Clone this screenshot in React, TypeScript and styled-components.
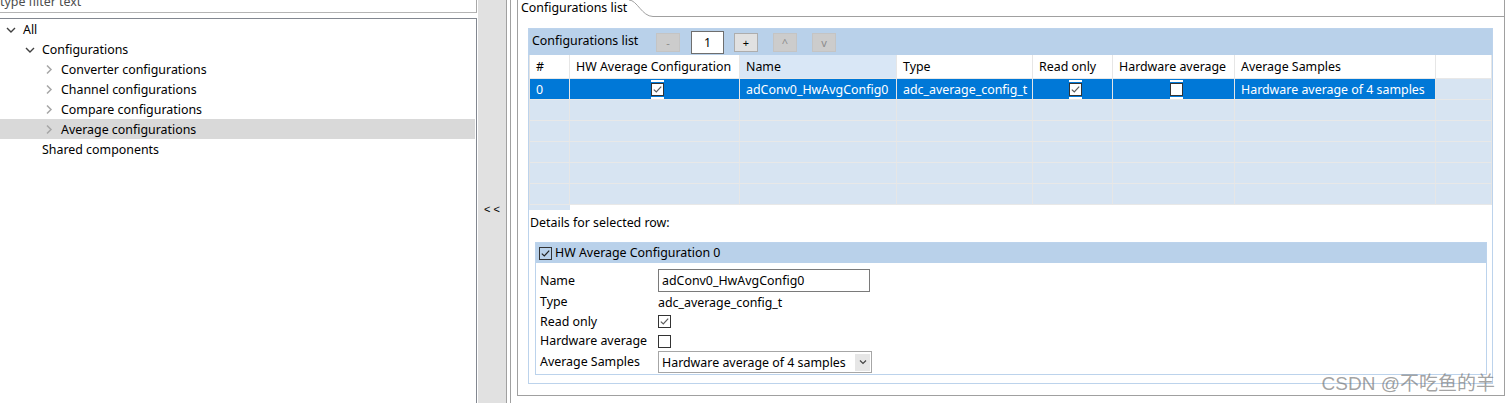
import React from 'react';
import styled, { createGlobalStyle, css } from 'styled-components';

const GlobalStyle = createGlobalStyle`
  *, *::before, *::after { box-sizing: border-box; }
  html, body { margin: 0; padding: 0; background: #fff; }
  body {
    font-family: "Noto Sans", "Noto Sans CJK SC", sans-serif;
    font-size: 12.4px;
    color: #000;
    overflow: hidden;
  }
`;

const Screen = styled.div`
  position: relative;
  display: flex;
  width: 1511px;
  height: 403px;
  overflow: hidden;
  background: #fff;
`;

/* ---------- left tree panel ---------- */
const LeftPanel = styled.div`
  flex: none;
  width: 477px;
  display: flex;
  flex-direction: column;
`;

const FilterBox = styled.div`
  flex: none;
  height: 13px;
  border-right: 1px solid #a8a8a8;
  border-bottom: 1px solid #b4b4b4;
  overflow: hidden;
`;

const FilterText = styled.div`
  margin-top: -5px;
  line-height: 14px;
  color: #4d4d4d;
  white-space: nowrap;
`;

const TreeBox = styled.div`
  flex: 1;
  margin-top: 5px;
  border-top: 1px solid #828790;
  border-right: 1px solid #828790;
  padding-right: 1px;
`;

const TreeRow = styled.div<{ $level: number; $selected?: boolean }>`
  display: flex;
  align-items: center;
  height: 20px;
  padding-left: ${p => 3 + p.$level * 19}px;
  background: ${p => (p.$selected ? '#d9d9d9' : 'transparent')};
  white-space: nowrap;
`;

const TwistySvg = styled.svg`
  flex: none;
  width: 16px;
  height: 16px;
  margin-right: 4px;
`;

type TwistyState = 'open' | 'closed' | 'none';

const Twisty = ({ state }: { state: TwistyState }) => (
  <TwistySvg viewBox="0 0 16 16">
    {state === 'open' && (
      <path d="M4 7 L8 11 L12 7" fill="none" stroke="#404040" strokeWidth="1.4" />
    )}
    {state === 'closed' && (
      <path d="M6 4.5 L10 8.5 L6 12.5" fill="none" stroke="#a6a6a6" strokeWidth="1.5" />
    )}
  </TwistySvg>
);

/* ---------- sash ---------- */
const Sash = styled.div`
  flex: none;
  width: 29px;
  margin-left: 1px;
  background: #e1e1e1;
  border-right: 1px solid #a0a0a0;
  display: flex;
  justify-content: center;
`;

const SashGlyph = styled.span`
  margin-top: 203px;
  height: 12px;
  line-height: 12px;
  font-family: "Liberation Sans", sans-serif;
  font-size: 11px;
  letter-spacing: 3px;
  padding-left: 3px;
  color: #000;
`;

/* ---------- editor / tab folder ---------- */
const Editor = styled.div`
  flex: 1;
  display: flex;
  margin-left: 3px;
  border-left: 1px solid #a0a0a0;
  padding: 0 6px 7px 6px;
`;

const TabFolder = styled.div`
  flex: 1;
  display: flex;
  flex-direction: column;
  border-left: 1px solid #a0a0a0;
  border-right: 1px solid #a0a0a0;
  border-bottom: 1px solid #a0a0a0;
`;

const TabHeader = styled.div`
  flex: none;
  display: flex;
  height: 17px;
`;

const TabLabel = styled.div`
  flex: none;
  width: 111px;
  height: 16px;
  line-height: 15px;
  padding-left: 3px;
  white-space: nowrap;
`;

const TabCurve = styled.svg`
  flex: none;
  width: 26px;
  height: 17px;
`;

const TabRest = styled.div`
  flex: 1;
  height: 17px;
  border-bottom: 1px solid #a0a0a0;
`;

const TabBody = styled.div`
  flex: 1;
  display: flex;
  flex-direction: column;
  padding: 11px 11px 11px 10px;
`;

const Section = styled.div`
  flex: 1;
  display: flex;
  flex-direction: column;
  border: 1px solid #bcd3ec;
`;

const SectionHeader = styled.div`
  flex: none;
  display: flex;
  align-items: center;
  height: 26px;
  padding-left: 3px;
  background: #b9d1ea;
`;

const SectionTitle = styled.span`
  flex: none;
  width: 124px;
  margin-bottom: 4px;
  white-space: nowrap;
`;

const ToolButton = styled.button<{ $enabled?: boolean; $gap: number }>`
  flex: none;
  width: 24px;
  height: 19px;
  margin-left: ${p => p.$gap}px;
  padding: 0;
  display: flex;
  align-items: center;
  justify-content: center;
  font-family: "Noto Sans", sans-serif;
  font-size: 11px;
  line-height: 1;
  border: 1px solid ${p => (p.$enabled ? '#adadad' : '#c4c4c4')};
  background: ${p => (p.$enabled ? '#e1e1e1' : '#cccccc')};
  color: ${p => (p.$enabled ? '#000' : '#8c8c8c')};
`;

const IndexInput = styled.div`
  flex: none;
  width: 33px;
  height: 23px;
  margin-left: 11px;
  display: flex;
  align-items: center;
  justify-content: center;
  background: #fff;
  border: 1px solid #6e6e6e;
`;

/* ---------- table ---------- */
const Table = styled.div`
  flex: none;
  display: flex;
  flex-direction: column;
  border-left: 1px solid #e3e3e3;
`;

const Row = styled.div<{ $header?: boolean }>`
  display: grid;
  grid-template-columns: 40px 170px 157px 136px 80px 122px 201px 1fr;
  height: ${p => (p.$header ? 24 : 21)}px;
`;

type Tone = 'header' | 'sorted' | 'selected' | 'empty';

const toneBg: Record<Tone, string> = {
  header: '#ffffff',
  sorted: '#d9e7f6',
  selected: '#0078d7',
  empty: '#d7e4f2',
};

const Cell = styled.div<{ $tone: Tone; $center?: boolean }>`
  display: flex;
  align-items: center;
  justify-content: ${p => (p.$center ? 'center' : 'flex-start')};
  padding-left: 6px;
  overflow: hidden;
  white-space: nowrap;
  border-right: 1px solid #e6e6e6;
  border-bottom: 1px solid #e8e8e8;
  background: ${p => toneBg[p.$tone]};
  color: ${p => (p.$tone === 'selected' ? '#fff' : '#000')};
`;

const ScrollStub = styled.div`
  flex: none;
  width: 41px;
  height: 5px;
  background: #d7e4f2;
`;

/* ---------- details ---------- */
const DetailsCaption = styled.div`
  flex: none;
  margin-top: 4px;
  padding-left: 1px;
  height: 18px;
  line-height: 17px;
`;

const Group = styled.div`
  flex: none;
  margin: 10px 5px 8px 6px;
  border: 1px solid #bcd3ec;
`;

const GroupHeader = styled.div`
  display: flex;
  align-items: center;
  height: 20px;
  padding-left: 3px;
  background: #b9d1ea;
  gap: 3px;
`;

const GroupTitle = styled.span`
  margin-bottom: 1px;
  white-space: nowrap;
`;

const FieldGrid = styled.div`
  display: grid;
  grid-template-columns: 118px 1fr;
  grid-template-rows: 23px 20px 19px 20px 22px;
  padding: 6px 0 1px 4px;
`;

const FieldLabel = styled.div`
  display: flex;
  align-items: center;
  padding-bottom: 1px;
  white-space: nowrap;
`;

const FieldValue = styled.div<{ $alignEnd?: boolean }>`
  display: flex;
  align-items: ${p => (p.$alignEnd ? 'flex-end' : 'center')};
  white-space: nowrap;
`;

const TextField = styled.div`
  width: 212px;
  height: 23px;
  display: flex;
  align-items: center;
  padding-left: 3px;
  border: 1px solid #7a7a7a;
  background: #fff;
`;

const SelectField = styled.div`
  width: 214px;
  height: 22px;
  display: flex;
  align-items: center;
  padding: 0 1px 0 3px;
  border: 1px solid #a6a6a6;
  background: #fff;
`;

const SelectText = styled.span`
  flex: 1;
  white-space: nowrap;
`;

const SelectArrow = styled.span`
  flex: none;
  width: 15px;
  height: 17px;
  display: flex;
  align-items: center;
  justify-content: center;
  background: #e6e6e6;
`;

const Box = styled.span<{ $onBlue?: boolean; $clear?: boolean }>`
  position: relative;
  flex: none;
  width: 13px;
  height: 13px;
  display: inline-flex;
  align-items: center;
  justify-content: center;
  border: 1px solid #333;
  background: ${p => (p.$clear ? 'transparent' : '#fff')};
  ${p =>
    p.$onBlue &&
    css`
      &::before,
      &::after {
        content: '';
        position: absolute;
        left: -1px;
        right: -1px;
        height: 2px;
        background: #fff;
      }
      &::before { top: -4px; }
      &::after { bottom: -4px; }
    `}
`;

const CheckBox = ({
  checked,
  onBlue,
  clear,
  color = '#5c5c5c',
}: {
  checked?: boolean;
  onBlue?: boolean;
  clear?: boolean;
  color?: string;
}) => (
  <Box $onBlue={onBlue} $clear={clear}>
    {checked && (
      <svg width="11" height="11" viewBox="0 0 11 11">
        <polyline points="1.8,5.6 4.3,8 9.2,2.6" fill="none" stroke={color} strokeWidth="1.2" />
      </svg>
    )}
  </Box>
);

const Watermark = styled.div`
  position: absolute;
  right: 16px;
  bottom: 8px;
  font-family: "Liberation Sans", "Noto Sans CJK SC", sans-serif;
  font-size: 19px;
  line-height: 22px;
  color: rgba(110, 110, 110, 0.65);
  pointer-events: none;
  white-space: nowrap;
`;

const treeItems: { label: string; level: number; twisty: TwistyState; selected?: boolean }[] = [
  { label: 'All', level: 0, twisty: 'open' },
  { label: 'Configurations', level: 1, twisty: 'open' },
  { label: 'Converter configurations', level: 2, twisty: 'closed' },
  { label: 'Channel configurations', level: 2, twisty: 'closed' },
  { label: 'Compare configurations', level: 2, twisty: 'closed' },
  { label: 'Average configurations', level: 2, twisty: 'closed', selected: true },
  { label: 'Shared components', level: 1, twisty: 'none' },
];

const headers = ['#', 'HW Average Configuration', 'Name', 'Type', 'Read only', 'Hardware average', 'Average Samples', ''];

export default function App() {
  return (
    <>
      <GlobalStyle />
      <Screen>
        <LeftPanel>
          <FilterBox>
            <FilterText>type filter text</FilterText>
          </FilterBox>
          <TreeBox>
            {treeItems.map(item => (
              <TreeRow key={item.label} $level={item.level} $selected={item.selected}>
                <Twisty state={item.twisty} />
                {item.label}
              </TreeRow>
            ))}
          </TreeBox>
        </LeftPanel>

        <Sash>
          <SashGlyph>&lt;&lt;</SashGlyph>
        </Sash>

        <Editor>
          <TabFolder>
            <TabHeader>
              <TabLabel>Configurations list</TabLabel>
              <TabCurve viewBox="0 0 26 17">
                <path d="M0 0 C 8 0, 13 16.5, 24 16.5 L 26 16.5" fill="none" stroke="#a0a0a0" strokeWidth="1" />
              </TabCurve>
              <TabRest />
            </TabHeader>
            <TabBody>
              <Section>
                <SectionHeader>
                  <SectionTitle>Configurations list</SectionTitle>
                  <ToolButton $gap={0}>-</ToolButton>
                  <IndexInput>1</IndexInput>
                  <ToolButton $gap={10} $enabled>+</ToolButton>
                  <ToolButton $gap={15}>^</ToolButton>
                  <ToolButton $gap={15}>v</ToolButton>
                </SectionHeader>

                <Table>
                  <Row $header>
                    {headers.map((h, i) => (
                      <Cell key={i} $tone={i === 2 ? 'sorted' : 'header'}>
                        {h}
                      </Cell>
                    ))}
                  </Row>
                  <Row>
                    <Cell $tone="selected">0</Cell>
                    <Cell $tone="selected" $center>
                      <CheckBox checked onBlue />
                    </Cell>
                    <Cell $tone="selected">adConv0_HwAvgConfig0</Cell>
                    <Cell $tone="selected">adc_average_config_t</Cell>
                    <Cell $tone="selected" $center>
                      <CheckBox checked onBlue />
                    </Cell>
                    <Cell $tone="selected" $center>
                      <CheckBox onBlue />
                    </Cell>
                    <Cell $tone="selected">Hardware average of 4 samples</Cell>
                    <Cell $tone="empty" />
                  </Row>
                  {[0, 1, 2, 3, 4].map(r => (
                    <Row key={r}>
                      {headers.map((_, i) => (
                        <Cell key={i} $tone="empty" />
                      ))}
                    </Row>
                  ))}
                </Table>
                <ScrollStub />

                <DetailsCaption>Details for selected row:</DetailsCaption>

                <Group>
                  <GroupHeader>
                    <CheckBox checked clear color="#222" />
                    <GroupTitle>HW Average Configuration 0</GroupTitle>
                  </GroupHeader>
                  <FieldGrid>
                    <FieldLabel>Name</FieldLabel>
                    <FieldValue>
                      <TextField>adConv0_HwAvgConfig0</TextField>
                    </FieldValue>
                    <FieldLabel>Type</FieldLabel>
                    <FieldValue>adc_average_config_t</FieldValue>
                    <FieldLabel>Read only</FieldLabel>
                    <FieldValue>
                      <CheckBox checked />
                    </FieldValue>
                    <FieldLabel>Hardware average</FieldLabel>
                    <FieldValue>
                      <CheckBox />
                    </FieldValue>
                    <FieldLabel>Average Samples</FieldLabel>
                    <FieldValue $alignEnd>
                      <SelectField>
                        <SelectText>Hardware average of 4 samples</SelectText>
                        <SelectArrow>
                          <svg width="8" height="6" viewBox="0 0 8 6">
                            <path d="M1 1.5 L4 4.5 L7 1.5" fill="none" stroke="#444" strokeWidth="1.2" />
                          </svg>
                        </SelectArrow>
                      </SelectField>
                    </FieldValue>
                  </FieldGrid>
                </Group>
              </Section>
            </TabBody>
          </TabFolder>
        </Editor>

        <Watermark>CSDN @不吃鱼的羊</Watermark>
      </Screen>
    </>
  );
}
